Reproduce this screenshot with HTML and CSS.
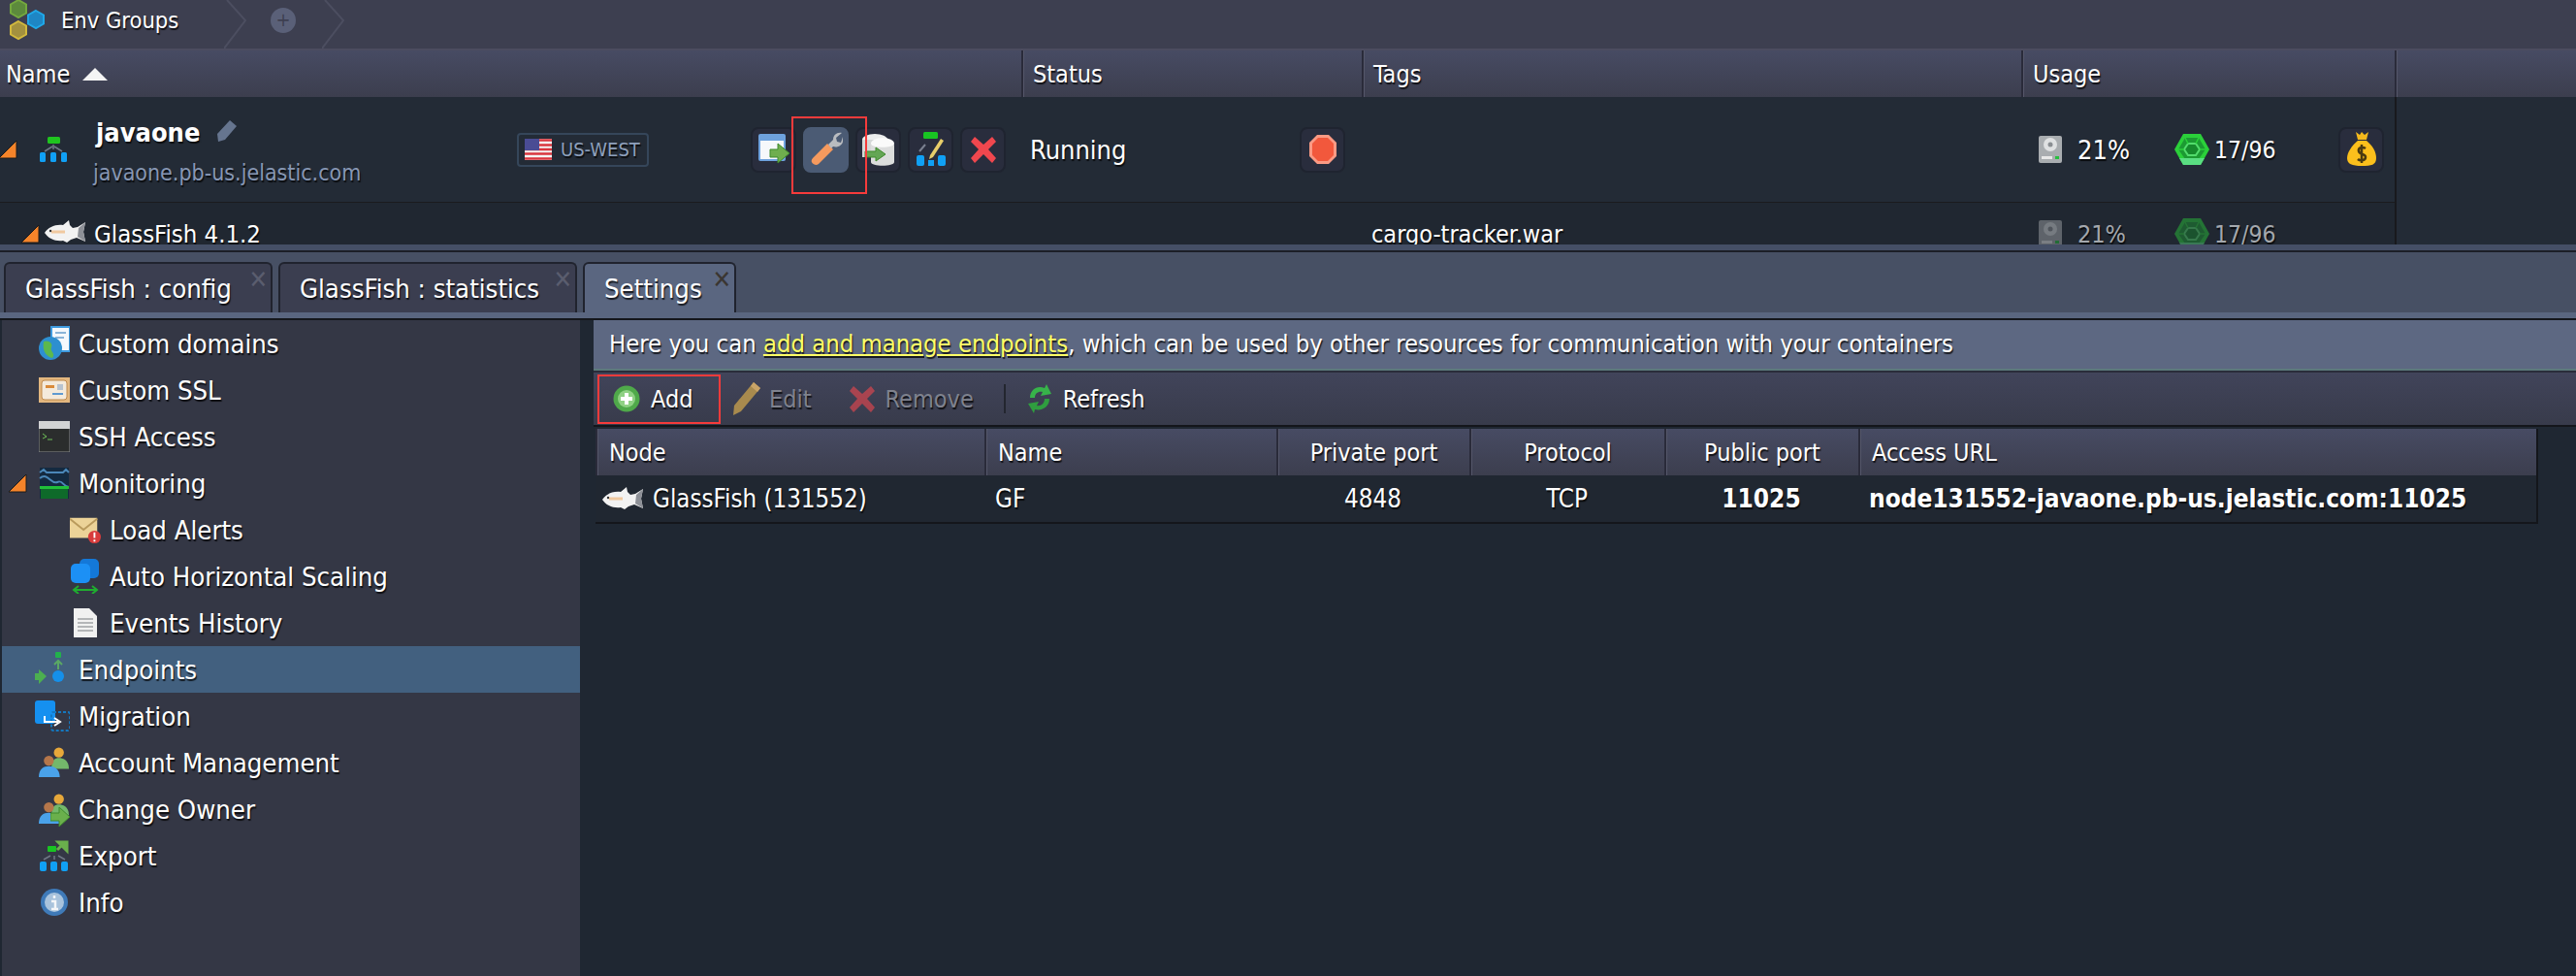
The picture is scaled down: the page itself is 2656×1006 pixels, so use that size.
FILE: index.html
```html
<!DOCTYPE html>
<html lang="en">
<head>
  <meta charset="UTF-8">
  <title>Env Groups</title>
  <link rel="stylesheet" href="styles.css">
</head>
<body>
  <!-- shared icons -->
  <svg class="defs">
    <symbol id="tri" viewBox="0 0 20 20"><path d="M19 1V19H1Z" fill="#f5842a" stroke="#1a1a1a"/></symbol>
    <symbol id="fish" viewBox="0 0 44 26">
      <path d="M30 9 35 8 43 3 41 13 43 23 34 19 28 21 24 24 20 22C12 23 5 20 1 14 5 8 12 5 20 6L26 1 27 6Z" fill="#f2f2f2"/>
      <path d="M36 9 43 3 41 13 43 23 35 18Z" fill="#8d9097"/>
      <path d="M8 13H22" stroke="#f0c9a0" stroke-width="3"/>
      <circle cx="7" cy="12" r="1.2" fill="#333"/>
    </symbol>
    <symbol id="topo" viewBox="0 0 28 26">
      <rect x="8" y="0" width="13" height="7" rx="1.5" fill="#1fc41f"/>
      <path d="M14 8V13M5 15 13 10M23 15 15 10" stroke="#6f7785" stroke-width="1.5" fill="none"/>
      <rect x="0" y="16" width="6" height="10" rx="1.5" fill="#10a0f5"/>
      <rect x="11" y="16" width="6" height="10" rx="1.5" fill="#10a0f5"/>
      <rect x="22" y="16" width="6" height="10" rx="1.5" fill="#10a0f5"/>
    </symbol>
    <symbol id="hdd" viewBox="0 0 24 28">
      <rect width="24" height="28" rx="2" fill="#a9adb0"/>
      <circle cx="12" cy="9" r="7" fill="#dfe1e2"/>
      <circle cx="12" cy="9" r="2.5" fill="#8a8e92"/>
      <rect x="3" y="21" width="11" height="3" fill="#e8e8e8"/>
      <rect x="17" y="21" width="4" height="3" fill="#28c040"/>
    </symbol>
    <symbol id="hex" viewBox="0 0 36 32">
      <path d="M9 0H27L36 16 27 32H9L0 16Z" fill="#2bd03a"/>
      <path d="M11 4H25L32 16 25 26H11L4 16Z" fill="#1c9a32"/>
      <path d="M14 10H22L26 16 22 22H14L10 16Z" fill="#168a2c" stroke="#52dc6c" stroke-width="2"/>
      <path d="M11 4 14 10M25 4 22 10M4 16H10M32 16H26" stroke="#2bd03a" stroke-width="1.500"/>
      <path d="M9 32H27L31 25H5Z" fill="#5ade82"/>
    </symbol>
    <symbol id="xmark" viewBox="0 0 28 28">
      <path d="M5 1 14 9 23 1 27 6 19 14 27 23 23 28 14 19 5 28 1 23 9 14 1 6Z" fill="#f0474e"/>
    </symbol>
    <symbol id="users" viewBox="0 0 34 34">
      <circle cx="22" cy="6" r="5.5" fill="#e7a83a"/>
      <path d="M14 22C14 14 18 12 22 12S33 14 33 24H20Z" fill="#74b86b"/>
      <circle cx="11" cy="15" r="5.5" fill="#b5764a"/>
      <path d="M0 33C0 24 5 21 11 21S23 24 23 33Z" fill="#4aa2ea"/>
    </symbol>
  </svg>

  <section class="env-panel">
    <div class="crumbs">
      <svg class="logo" viewBox="0 0 44 42" width="44" height="42">
        <path d="M16 1 24 5.500V14.500L16 19 8 14.500V5.500Z" transform="translate(-1 -1)" fill="#5c8a3c" stroke="#74a83e" stroke-width="2"/>
        <path d="M16 1 24 5.500V14.500L16 19 8 14.500V5.500Z" transform="translate(17 10)" fill="#1e86c4" stroke="#1fa8e8" stroke-width="2"/>
        <path d="M16 1 24 5.500V14.500L16 19 8 14.500V5.500Z" transform="translate(-1 21)" fill="#a3913f" stroke="#d2b93d" stroke-width="2"/>
      </svg>
      <span class="crumb-label">Env Groups</span>
      <svg class="chevron" viewBox="0 0 24 50" width="24" height="50"><path d="M3 0 22 21 0 50" fill="none" stroke="#4c4e60" stroke-width="2"/></svg>
      <span class="crumb-add">+</span>
      <svg class="chevron" viewBox="0 0 24 50" width="24" height="50"><path d="M3 0 22 21 0 50" fill="none" stroke="#4c4e60" stroke-width="2"/></svg>
    </div>

    <div class="env-head">
      <div class="head-cell">Name <span class="sort-up"></span></div>
      <div class="head-cell">Status</div>
      <div class="head-cell">Tags</div>
      <div class="head-cell">Usage</div>
      <div class="head-cell"></div>
    </div>

    <div class="env-row env-main">
      <div class="env-name">
        <svg class="tree-tri"><use href="#tri"/></svg>
        <svg class="topo-icon"><use href="#topo"/></svg>
        <div class="env-title">
          <div class="env-line">
            <b>javaone</b>
            <svg class="rename" viewBox="0 0 20 22" width="20" height="22"><path d="M13 0 20 6 8 20 1 22 0 14Z" fill="#66758f"/></svg>
          </div>
          <div class="env-url">javaone.pb-us.jelastic.com</div>
        </div>
        <div class="region">
          <svg class="flag" viewBox="0 0 28 22" width="28" height="22">
            <rect width="28" height="22" fill="#f4f4f4"/>
            <path d="M0 1.500H28M0 6.500H28M0 11H28M0 15.500H28M0 20.500H28" stroke="#d9363e" stroke-width="2.500"/>
            <rect width="15" height="12" fill="#4a4c94"/>
          </svg>
          US-WEST
        </div>
        <div class="actions">
          <span class="act-btn">
            <svg viewBox="0 0 32 34" width="32" height="34">
              <rect x="0" y="1" width="28" height="28" rx="2" fill="#6ea2de"/>
              <rect x="2" y="8" width="24" height="19" fill="#f6f8fb"/>
              <path d="M12 17H20V11L32 21 20 31V25H12Z" fill="#6fae4e" stroke="#3f8a2c"/>
            </svg>
          </span>
          <span class="act-btn act-on">
            <svg viewBox="0 0 34 36" width="34" height="36">
              <path d="M3 27 18 12 24 18 9 33C5 36-1 31 3 27Z" fill="#f59a5e"/>
              <path d="M19 13 24 8C24 3 28 0 33 1L27 6 28 10 32 11 34 5C36 12 30 17 24 15L22 17Z" fill="#b9bcc0"/>
            </svg>
          </span>
          <span class="act-btn">
            <svg viewBox="0 0 34 34" width="34" height="34">
              <ellipse cx="13" cy="7" rx="13" ry="6" fill="#eceded"/>
              <rect x="0" y="7" width="26" height="18" fill="#d6d8d8"/>
              <ellipse cx="21" cy="11" rx="12" ry="6" fill="#fafafa"/>
              <path d="M9 11V30C9 35 33 35 33 30V11C33 16 9 16 9 11Z" fill="#dcdddd"/>
              <path d="M3 19H14V15L24 22 14 29V25H3Z" fill="#64a655" stroke="#3f8a2c"/>
            </svg>
          </span>
          <span class="act-btn">
            <svg viewBox="0 0 30 36" width="30" height="36">
              <rect x="7" y="0" width="15" height="7" rx="1.500" fill="#18c422"/>
              <rect x="0" y="24" width="8" height="11" rx="2" fill="#10a0f5"/>
              <rect x="12" y="29" width="6" height="6" fill="#10a0f5"/>
              <rect x="22" y="24" width="8" height="11" rx="2" fill="#10a0f5"/>
              <path d="M3 20 9 13" stroke="#7b8190" stroke-width="2"/>
              <path d="M14 24 25 7 28 9 17 26 13 28Z" fill="#e8ce6a"/>
            </svg>
          </span>
          <span class="act-btn"><svg width="28" height="28"><use href="#xmark"/></svg></span>
        </div>
      </div>
      <div class="env-status">
        <span>Running</span>
        <span class="act-btn">
          <svg viewBox="0 0 28 30" width="28" height="30"><path d="M8 0H20L28 8V22L20 30H8L0 22V8Z" fill="#fb9a84"/><path d="M9 3H19L25 9V21L19 27H9L3 21V9Z" fill="#f2583c"/></svg>
        </span>
      </div>
      <div class="env-tags"></div>
      <div class="env-usage">
        <svg class="hdd"><use href="#hdd"/></svg>
        <span class="use-pct">21%</span>
        <svg class="hex"><use href="#hex"/></svg>
        <span class="use-count">17/96</span>
        <span class="act-btn money">
          <svg viewBox="0 0 30 36" width="30" height="36">
            <path d="M9 0 13 3 15 0 18 3 22 0 20 8H11Z" fill="#f4b91c"/>
            <path d="M11 9H20C26 14 30 20 30 27S25 35 15 35 0 33 0 27 5 14 11 9Z" fill="#fbbf1c"/>
            <path d="M19 17C16 15 11 16 12 20S19 22 19 26 13 30 11 28M15 13V32" fill="none" stroke="#4a3a10" stroke-width="2.500"/>
          </svg>
        </span>
      </div>
    </div>

    <div class="env-row env-node">
      <div class="env-name">
        <svg class="node-tri"><use href="#tri"/></svg>
        <svg class="fish-top"><use href="#fish"/></svg>
        <span class="node-title">GlassFish 4.1.2</span>
      </div>
      <div class="env-status"></div>
      <div class="env-tags">cargo-tracker.war</div>
      <div class="env-usage dim">
        <svg class="hdd"><use href="#hdd"/></svg>
        <span class="use-pct">21%</span>
        <svg class="hex"><use href="#hex"/></svg>
        <span class="use-count">17/96</span>
      </div>
    </div>
  </section>

  <div class="splitter"></div>

  <div class="tabs">
    <div class="tab tab-first">GlassFish : config<i class="tab-close">&#10005;</i></div>
    <div class="tab tab-second">GlassFish : statistics<i class="tab-close">&#10005;</i></div>
    <div class="tab tab-on">Settings<i class="tab-close">&#10005;</i></div>
  </div>
  <div class="tabs-strip"></div>

  <main class="settings">
    <ul class="menu">
      <li class="menu-item">
        <svg viewBox="0 0 32 36" width="32" height="36">
          <rect x="13" y="1" width="19" height="25" fill="#f4f8fc" stroke="#3f9be0" stroke-width="2"/>
          <path d="M17 7H28M17 12H26" stroke="#8ab4d8" stroke-width="2"/>
          <circle cx="12" cy="23" r="12" fill="#2d8fd0"/>
          <path d="M5 16C10 14 15 18 13 22S18 28 14 33C9 32 3 27 5 16Z" fill="#5cb84e"/>
        </svg>
        Custom domains
      </li>
      <li class="menu-item">
        <svg viewBox="0 0 32 26" width="32" height="26">
          <rect width="32" height="26" fill="#e3b77f"/>
          <rect x="3" y="3" width="26" height="20" rx="3" fill="#f4eadb" stroke="#c08a4c"/>
          <rect x="7" y="8" width="9" height="3" fill="#d98a3a"/>
          <rect x="19" y="7" width="6" height="6" fill="#b8c3cf"/>
          <path d="M14 17H25" stroke="#5f9ad0" stroke-width="2"/>
        </svg>
        Custom SSL
      </li>
      <li class="menu-item">
        <svg viewBox="0 0 32 32" width="32" height="32">
          <rect width="32" height="32" fill="#2b2d2d" stroke="#8c8f90"/>
          <rect width="32" height="8" fill="#d2d3d4"/>
          <path d="M4 13 8 16 4 18M9 19H14" stroke="#6fbf58" fill="none"/>
        </svg>
        SSH Access
      </li>
      <li class="menu-item">
        <svg class="menu-tri"><use href="#tri"/></svg>
        <svg viewBox="0 0 30 32" width="30" height="32">
          <rect width="30" height="32" fill="#142a40"/>
          <path d="M0 5 4 2 7 5H24L27 2 30 5M0 11C8 4 12 18 18 15S24 20 30 20" stroke="#4b87b8" stroke-width="2" fill="none"/>
          <rect y="19" width="30" height="3" fill="#20c03a"/>
          <rect x="1" y="22" width="28" height="10" fill="#0e6a2a"/>
        </svg>
        Monitoring
      </li>
      <li class="menu-item menu-child">
        <svg viewBox="0 0 34 30" width="34" height="30">
          <rect y="2" width="30" height="22" fill="#ecd398"/>
          <path d="M0 3 15 15 30 3" fill="none" stroke="#b99a5c" stroke-width="2"/>
          <circle cx="27" cy="23" r="7" fill="#d83c3c"/>
          <path d="M27 18V24M27 26V28" stroke="#fff" stroke-width="2"/>
        </svg>
        Load Alerts
      </li>
      <li class="menu-item menu-child">
        <svg viewBox="0 0 32 36" width="32" height="36">
          <rect x="10" y="0" width="20" height="20" rx="5" fill="#1478d8"/>
          <rect x="1" y="5" width="20" height="20" rx="5" fill="#1c90f5"/>
          <path d="M4 32H28M9 28 4 32 9 36M23 28 28 32 23 36" stroke="#1fae2f" stroke-width="2" fill="none"/>
        </svg>
        Auto Horizontal Scaling
      </li>
      <li class="menu-item menu-child">
        <svg viewBox="0 0 32 30" width="32" height="30">
          <path d="M4 0H20L28 8V30H4Z" fill="#f1f1f1"/>
          <path d="M8 11H24M8 15H24M8 19H24M8 23H24" stroke="#b4b6b8" stroke-width="2"/>
        </svg>
        Events History
      </li>
      <li class="menu-item menu-on">
        <svg viewBox="0 0 36 36" width="36" height="36" class="wide-icon">
          <rect x="21" y="0" width="6" height="6" rx="1" fill="#22b14c"/>
          <path d="M24 18V9M20 13 24 9 28 13" stroke="#5aa864" stroke-width="2" fill="none"/>
          <circle cx="24" cy="25" r="6" fill="#1590ea"/>
          <path d="M0 22H4V18L12 25 4 33V29H0Z" fill="#4caf50"/>
        </svg>
        Endpoints
      </li>
      <li class="menu-item">
        <svg viewBox="0 0 36 32" width="36" height="32" class="wide-icon">
          <rect x="0" y="0" width="21" height="24" rx="3" fill="#1590f0"/>
          <rect x="17" y="12" width="19" height="19" rx="2" fill="none" stroke="#1478c0" stroke-width="2" stroke-dasharray="3 2"/>
          <path d="M10 16V22H24M20 18 26 22 20 26" fill="none" stroke="#fff" stroke-width="2"/>
        </svg>
        Migration
      </li>
      <li class="menu-item"><svg width="32" height="32"><use href="#users"/></svg>Account Management</li>
      <li class="menu-item">
        <span class="icon-stack">
          <svg width="32" height="32"><use href="#users"/></svg>
          <svg class="icon-badge" viewBox="0 0 20 20" width="20" height="20"><path d="M0 6H9V0L20 10 9 20V14H0Z" fill="#6ab04c" stroke="#3f8a2c"/></svg>
        </span>
        Change Owner
      </li>
      <li class="menu-item">
        <svg viewBox="0 0 30 32" width="30" height="32">
          <rect x="8" y="6" width="9" height="6" rx="1" fill="#18c422"/>
          <path d="M18 10 25 3M19 2H28V11Z" stroke="#6ab04c" stroke-width="3" fill="#6ab04c"/>
          <path d="M4 20 11 16M15 16V20M26 20 19 16" stroke="#6f7785" stroke-width="1.500"/>
          <rect x="0" y="22" width="7" height="10" rx="2" fill="#10a0f5"/>
          <rect x="11" y="22" width="7" height="10" rx="2" fill="#10a0f5"/>
          <rect x="22" y="22" width="7" height="10" rx="2" fill="#10a0f5"/>
        </svg>
        Export
      </li>
      <li class="menu-item">
        <svg viewBox="0 0 28 28" width="28" height="28">
          <circle cx="14" cy="14" r="14" fill="#3f7ab8"/>
          <circle cx="14" cy="14" r="10" fill="#a9c3dc"/>
          <path d="M14 7V10M11 13H15V21M11 21H18" stroke="#f4f6f8" stroke-width="2.500" fill="none"/>
        </svg>
        Info
      </li>
    </ul>

    <section class="content">
      <div class="hint">Here you can <a class="hint-link">add and manage endpoints</a>, which can be used by other resources for communication with your containers</div>

      <div class="toolbar">
        <div class="tool tool-add">
          <svg viewBox="0 0 28 28" width="28" height="28">
            <circle cx="14" cy="14" r="13.500" fill="#4fa94a"/>
            <circle cx="14" cy="14" r="9" fill="#8fd184"/>
            <path d="M14 8V20M8 14H20" stroke="#fff" stroke-width="4"/>
          </svg>
          Add
        </div>
        <div class="tool tool-off tool-edit">
          <svg viewBox="0 0 30 36" width="30" height="36">
            <path d="M22 1 29 7 9 31 1 35 2 25Z" fill="#a88a4e"/>
            <path d="M22 1 29 7 26 11 19 5Z" fill="#c9a468"/>
          </svg>
          Edit
        </div>
        <div class="tool tool-off tool-remove">
          <svg class="x-off" width="28" height="28"><use href="#xmark"/></svg>
          Remove
        </div>
        <span class="tool-sep"></span>
        <div class="tool tool-refresh">
          <svg viewBox="0 0 26 30" width="26" height="30">
            <path d="M3 14C3 6 10 1 18 4L20 0 25 10 14 12 16 8C12 7 8 9 8 14Z" fill="#37b34a"/>
            <path d="M23 15C23 23 16 28 8 26L7 30 1 20 12 18 10 22C14 23 18 20 18 15Z" fill="#2f9e3f"/>
          </svg>
          Refresh
        </div>
      </div>

      <div class="grid">
        <div class="grid-head">
          <div class="grid-cell">Node</div>
          <div class="grid-cell">Name</div>
          <div class="grid-cell mid">Private port</div>
          <div class="grid-cell mid">Protocol</div>
          <div class="grid-cell mid">Public port</div>
          <div class="grid-cell">Access URL</div>
        </div>
        <div class="grid-row">
          <div class="grid-val node-val"><svg class="fish-row"><use href="#fish"/></svg>GlassFish (131552)</div>
          <div class="grid-val">GF</div>
          <div class="grid-val mid">4848</div>
          <div class="grid-val mid">TCP</div>
          <div class="grid-val mid strong">11025</div>
          <div class="grid-val strong">node131552-javaone.pb-us.jelastic.com:11025</div>
        </div>
      </div>
    </section>
  </main>
</body>
</html>
```

FILE: styles.css
```css
* {
  box-sizing: border-box;
}

html, body {
  height: 100%;
}

body {
  margin: 0;
  overflow: hidden;
  display: flex;
  flex-direction: column;
  background: #1f2732;
  color: #fff;
  font-family: "DejaVu Sans", "Liberation Sans", sans-serif;
  font-stretch: condensed;
  font-size: 27px;
  text-shadow: 1px 2px 1px rgba(0, 0, 0, 0.75);
}

.defs {
  display: none;
}

svg {
  flex: none;
  display: block;
}

/* top panel */
.env-panel {
  height: 252px;
  overflow: hidden;
  flex: none;
  background: #232b36;
}

.crumbs {
  height: 52px;
  display: flex;
  align-items: flex-start;
  background: #3d3f50;
  border-bottom: 2px solid #4c4c5f;
}

.logo {
  margin: 0 15px 0 4px;
}

.crumb-label {
  font-size: 23.500px;
  line-height: 42px;
  width: 168px;
}

.crumb-add {
  width: 26px;
  height: 26px;
  margin: 8px 27px 0 24px;
  border-radius: 50%;
  background: #5a6078;
  color: #3d3f50;
  font-size: 20px;
  line-height: 25px;
  text-align: center;
  text-shadow: none;
}

.env-head {
  height: 48px;
  display: grid;
  grid-template-columns: 1053px 351px 680px 385px 187px;
  background: linear-gradient(#474b63, #3c3e4e);
  font-size: 25px;
}

.head-cell {
  display: flex;
  align-items: center;
  padding-left: 10px;
  border-left: 2px solid #2a2b3a;
  box-shadow: inset 1px 0 0 #55576a;
}

.head-cell:first-child {
  padding-left: 6px;
  border-left: 0;
  box-shadow: none;
}

.sort-up {
  width: 0;
  height: 0;
  margin-left: 13px;
  border: 13px solid transparent;
  border-top: 0;
  border-bottom-color: #f4f4f4;
}

.env-row {
  width: 2471px;
  display: grid;
  grid-template-columns: 1053px 351px 680px 385px;
  border-right: 2px solid #18191d;
}

.env-main {
  height: 109px;
  background: #232b36;
  border-bottom: 1px solid #1a1b1e;
}

.env-node {
  height: 64px;
  background: #202731;
  font-size: 25px;
}

.env-name,
.env-status,
.env-tags,
.env-usage {
  display: flex;
  align-items: center;
}

.tree-tri {
  width: 20px;
  height: 20px;
  margin-left: -2px;
}

.topo-icon {
  width: 28px;
  height: 26px;
  margin-left: 23px;
}

.env-title {
  width: 437px;
  margin: 6px 0 0 27px;
}

.env-line {
  display: flex;
  align-items: center;
  gap: 18px;
  padding-left: 3px;
  height: 41px;
  font-size: 27px;
}

.rename {
  margin-top: -4px;
}

.env-url {
  height: 41px;
  line-height: 43px;
  font-size: 23px;
  color: #8797b4;
}

.region {
  width: 136px;
  height: 35px;
  display: flex;
  align-items: center;
  gap: 9px;
  padding-left: 6px;
  border: 2px solid #35465a;
  border-radius: 4px;
  color: #8ea0bc;
  font-size: 20px;
}

.actions {
  display: flex;
  gap: 7px;
  margin-left: 105px;
}

.act-btn {
  position: relative;
  width: 47px;
  height: 47px;
  flex: none;
  display: flex;
  align-items: center;
  justify-content: center;
  background: #292d3d;
  border: 2px solid #1f2430;
  border-radius: 8px;
}

.act-on {
  z-index: 1;
  background: #4b5b74;
  border-color: #4b5b74;
}

/* red callout round the current button */
.act-on::after {
  content: "";
  position: absolute;
  left: -14px;
  top: -13px;
  width: 74px;
  height: 76px;
  border: 2px solid #f63b3b;
}

.env-status {
  justify-content: space-between;
  padding: 0 17px 0 9px;
}

.env-tags {
  padding-left: 10px;
}

.env-usage {
  padding-left: 18px;
}

.hdd {
  width: 24px;
  height: 28px;
}

.use-pct {
  width: 100px;
  margin-left: 16px;
}

.hex {
  width: 36px;
  height: 32px;
}

.use-count {
  margin-left: 5px;
  font-size: 24.500px;
}

.money {
  margin-left: auto;
  margin-right: 11px;
}

.dim {
  color: #a4a8ad;
}

.dim svg {
  opacity: 0.45;
}

.node-tri {
  width: 20px;
  height: 20px;
  margin-left: 21px;
}

.fish-top {
  width: 44px;
  height: 26px;
  margin: -4px 8px 0 4px;
}

.node-title {
  font-size: 25.500px;
}

.splitter {
  height: 8px;
  flex: none;
  background: #454f66;
  border-bottom: 2px solid #1c1f27;
}

/* tabs */
.tabs {
  height: 62px;
  flex: none;
  display: flex;
  gap: 6px;
  align-items: flex-end;
  padding-left: 4px;
  background: #475064;
  font-size: 27.300px;
}

.tab {
  position: relative;
  height: 52px;
  padding: 6px 0 0 20px;
  line-height: 40px;
  background: #3b3e50;
  border: 2px solid #20232e;
  border-bottom: 0;
  border-radius: 6px 6px 0 0;
}

.tab-first {
  width: 277px;
}

.tab-second {
  width: 308px;
}

.tab-on {
  width: 158px;
  background: #5a6680;
}

.tab-close {
  position: absolute;
  right: 3px;
  top: 3px;
  color: #5a5d6e;
  font-size: 26px;
  font-style: normal;
  font-weight: bold;
  line-height: 26px;
  text-shadow: none;
}

.tab-on .tab-close {
  color: #3a3632;
}

.tabs-strip {
  height: 8px;
  flex: none;
  background: #5a6680;
  border-bottom: 2px solid #14161b;
}

/* settings */
.settings {
  flex: 1;
  min-height: 0;
  display: flex;
  background: #1f2732;
}

.menu {
  width: 596px;
  flex: none;
  margin: 0 14px 0 2px;
  padding: 0;
  list-style: none;
  background: #343745;
  font-size: 27.300px;
}

.menu-item {
  height: 48px;
  display: flex;
  align-items: center;
  padding-left: 38px;
}

.menu-item > svg {
  width: 32px;
}

.menu-item > svg,
.icon-stack {
  margin-right: 9px;
}

.menu-item .wide-icon {
  width: 36px;
  margin-left: -4px;
  margin-right: 9px;
}

.menu-item .menu-tri {
  width: 20px;
  height: 20px;
  margin: 0 12px 0 -32px;
}

.menu-child {
  padding-left: 70px;
}

.menu-on {
  background: #42607f;
}

.icon-stack {
  position: relative;
}

.icon-badge {
  position: absolute;
  right: 0;
  bottom: -2px;
}

.content {
  flex: 1;
  min-width: 0;
}

.hint {
  height: 52px;
  padding-left: 16px;
  line-height: 48px;
  font-size: 25.400px;
  background: #5d6882;
  border-bottom: 2px solid #5d7a7c;
}

.hint-link {
  color: #ffff66;
  text-decoration: underline;
}

.toolbar {
  height: 58px;
  display: flex;
  align-items: center;
  padding-left: 4px;
  background: linear-gradient(#41445a, #383b4b);
  border-top: 2px solid #2a2d3a;
  border-bottom: 2px solid #14161b;
}

.tool {
  display: flex;
  align-items: center;
  font-size: 25px;
}

.tool-add {
  width: 127px;
  height: 51px;
  gap: 11px;
  padding-left: 14px;
  border: 2px solid #f63b3b;
}

.tool-off {
  color: #7f828e;
}

.tool-edit {
  gap: 8px;
  margin-left: 12px;
}

.tool-remove {
  gap: 10px;
  margin-left: 38px;
}

.x-off {
  opacity: 0.6;
}

.tool-sep {
  width: 2px;
  height: 30px;
  margin-left: 31px;
  background: #23262f;
}

.tool-refresh {
  gap: 11px;
  margin-left: 22px;
}

.grid {
  width: 2003px;
  margin: 2px 0 0 2px;
  border-right: 2px solid #14161b;
  border-bottom: 2px solid #14161b;
  font-size: 25px;
}

.grid-head,
.grid-row {
  display: grid;
  grid-template-columns: 401px 301px 199px 201px 200px 1fr;
}

.grid-head {
  height: 48px;
  background: linear-gradient(#474b63, #3c3e4e);
}

.grid-cell {
  display: flex;
  align-items: center;
  padding-left: 12px;
  border-left: 2px solid #2a2b3a;
  box-shadow: inset 1px 0 0 #55576a;
}

.grid-row {
  height: 48px;
  background: #202731;
  font-size: 25.700px;
}

.grid-val {
  display: flex;
  align-items: center;
  padding-left: 11px;
}

.node-val {
  padding-left: 6px;
}

.fish-row {
  width: 44px;
  height: 26px;
  margin-right: 9px;
}

.mid {
  justify-content: center;
  padding-left: 0;
}

.strong {
  font-weight: bold;
  font-size: 26px;
}
```
